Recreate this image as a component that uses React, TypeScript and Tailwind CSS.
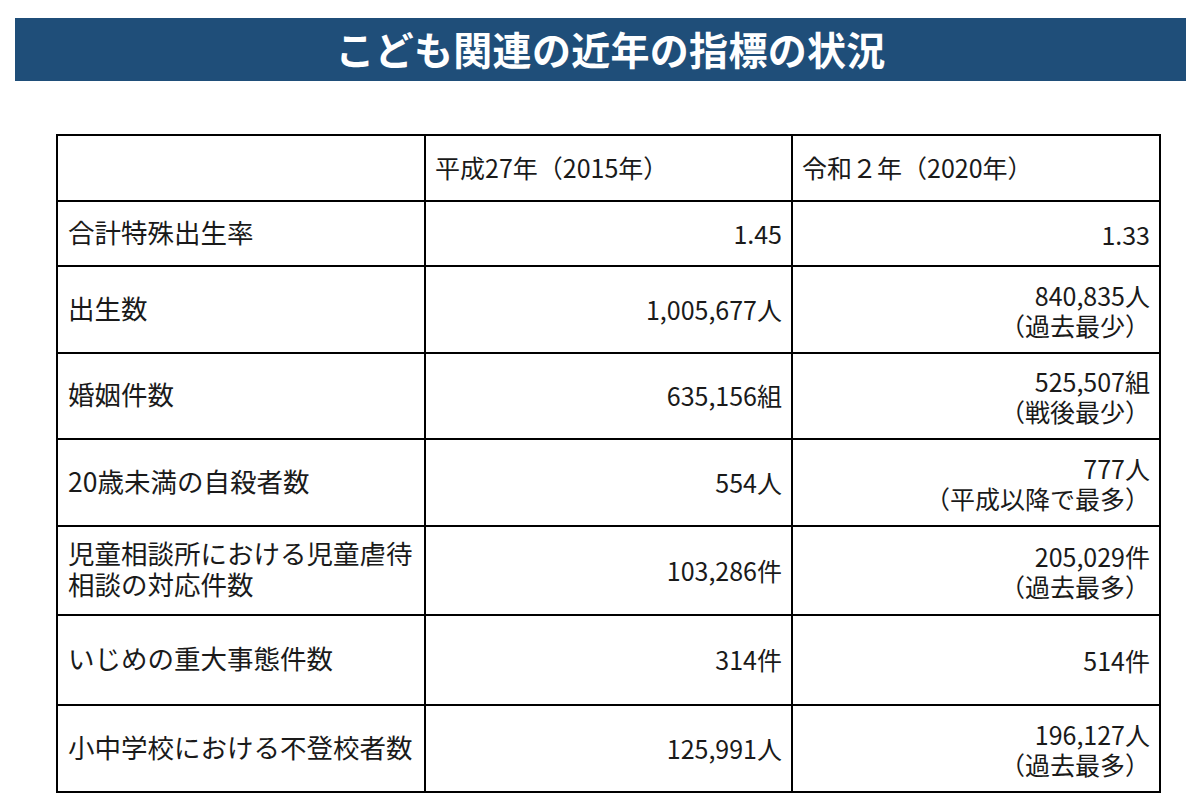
const rows: { label: string[]; h: string; a: string; b: string[] }[] = [
  { label: ["合計特殊出生率"], h: "h-[65px]", a: "1.45", b: ["1.33"] },
  { label: ["出生数"], h: "h-[87px]", a: "1,005,677人", b: ["840,835人", "（過去最少）"] },
  { label: ["婚姻件数"], h: "h-[86px]", a: "635,156組", b: ["525,507組", "（戦後最少）"] },
  { label: ["20歳未満の自殺者数"], h: "h-[87px]", a: "554人", b: ["777人", "（平成以降で最多）"] },
  {
    label: ["児童相談所における児童虐待", "相談の対応件数"],
    h: "h-[89px]",
    a: "103,286件",
    b: ["205,029件", "（過去最多）"],
  },
  { label: ["いじめの重大事態件数"], h: "h-[90px]", a: "314件", b: ["514件"] },
  { label: ["小中学校における不登校者数"], h: "h-[87px]", a: "125,991人", b: ["196,127人", "（過去最多）"] },
];

export default function App() {
  return (
    <div className="w-[1186px] h-[811px] overflow-hidden bg-white pt-[18px] font-['Noto_Sans_CJK_JP',sans-serif]">
      <div className="ml-[15px] h-[63px] bg-[#1f4e79] flex items-center justify-center pl-5 pb-[3px]">
        <h1 className="text-white text-[39px] font-bold tracking-[0.3px] leading-none">
          こども関連の近年の指標の状況
        </h1>
      </div>

      <table className="ml-[56px] mt-[53px] w-[1103px] border-collapse table-fixed text-[25px] text-[#1a1a1a]">
        <colgroup>
          <col className="w-[368px]" />
          <col className="w-[367px]" />
          <col className="w-[368px]" />
        </colgroup>
        <thead>
          <tr className="h-[66px]">
            <th className="border-2 border-black" />
            <th className="border-2 border-black px-[9px] text-left font-normal">平成27年（2015年）</th>
            <th className="border-2 border-black px-[9px] text-left font-normal">令和２年（2020年）</th>
          </tr>
        </thead>
        <tbody>
          {rows.map((r) => (
            <tr key={r.label[0]} className={r.h}>
              <td className="border-2 border-black px-[10px] pb-[5px] text-[26.5px] leading-[31px]">
                {r.label.map((l) => (
                  <div key={l} className="whitespace-nowrap">
                    {l}
                  </div>
                ))}
              </td>
              <td className="border-2 border-black px-[9px] text-right">{r.a}</td>
              <td className="border-2 border-black px-[9px] text-right leading-[30px]">
                {r.b.map((l) => (
                  <div key={l}>{l}</div>
                ))}
              </td>
            </tr>
          ))}
        </tbody>
      </table>
    </div>
  );
}
